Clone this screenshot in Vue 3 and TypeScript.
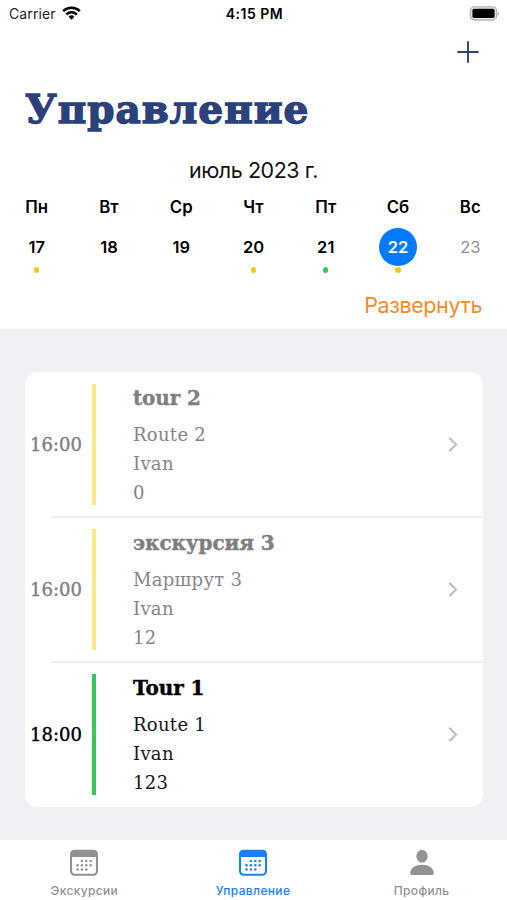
<script setup lang="ts">
interface Day { name: string; num: number; dot?: 'yellow' | 'green'; selected?: boolean; muted?: boolean }
interface Tour { time: string; title: string; route: string; guide: string; count: string; past: boolean }

const days: Day[] = [
  { name: 'Пн', num: 17, dot: 'yellow' },
  { name: 'Вт', num: 18 },
  { name: 'Ср', num: 19 },
  { name: 'Чт', num: 20, dot: 'yellow' },
  { name: 'Пт', num: 21, dot: 'green' },
  { name: 'Сб', num: 22, dot: 'yellow', selected: true },
  { name: 'Вс', num: 23, muted: true },
]

const tours: Tour[] = [
  { time: '16:00', title: 'tour 2', route: 'Route 2', guide: 'Ivan', count: '0', past: true },
  { time: '16:00', title: 'экскурсия 3', route: 'Маршрут 3', guide: 'Ivan', count: '12', past: true },
  { time: '18:00', title: 'Tour 1', route: 'Route 1', guide: 'Ivan', count: '123', past: false },
]

const tabs = [
  { label: 'Экскурсии', icon: 'calendar', active: false },
  { label: 'Управление', icon: 'calendar', active: true },
  { label: 'Профиль', icon: 'person', active: false },
]

const dots: [number, number][] = [
  [12.9, 12], [17.3, 12], [21.7, 12],
  [8.5, 16.2], [12.9, 16.2], [17.3, 16.2], [21.7, 16.2],
  [8.5, 20.4], [12.9, 20.4], [17.3, 20.4],
]
</script>

<template>
  <div class="screen">
    <header class="top">
      <div class="status">
        <div class="carrier">
          <span>Carrier</span>
          <svg width="19" height="14" viewBox="0 0 19 14" fill="none" stroke="#000" stroke-width="2.5">
            <path d="M1.2 5.1a11.8 11.8 0 0 1 16.6 0" />
            <path d="M4.3 8.5a7.4 7.4 0 0 1 10.4 0" />
            <path d="M9.5 13.7 6.6 10.8a4.1 4.1 0 0 1 5.8 0z" fill="#000" stroke="none" />
          </svg>
        </div>
        <div class="clock">4:15 PM</div>
        <div class="battery">
          <svg width="31" height="15" viewBox="0 0 31 15">
            <rect x="1.4" y="0.8" width="26.2" height="13.2" rx="4" fill="#e6e6e6" stroke="#b5b5b5" stroke-width="1.3" />
            <rect x="3.4" y="2.8" width="22.2" height="9.2" rx="1.8" fill="#000" />
            <path d="M29 5.2a2.6 2.6 0 0 1 0 4.4z" fill="#b0b0b0" />
          </svg>
        </div>
      </div>
      <div class="nav">
        <svg width="22" height="22" viewBox="0 0 22 22" stroke="#2b417c" stroke-width="1.9" stroke-linecap="round">
          <path d="M11 1v20M1 11h20" />
        </svg>
      </div>
      <h1 class="heading">Управление</h1>
      <div class="month">июль 2023 г.</div>
      <div class="week">
        <div v-for="d in days" :key="d.num" class="day">
          <span class="dname">{{ d.name }}</span>
          <span class="num" :class="{ selected: d.selected, muted: d.muted }">{{ d.num }}</span>
          <i class="dot" :class="d.dot"></i>
        </div>
      </div>
      <div class="expand"><span>Развернуть</span></div>
    </header>

    <main class="content">
      <div class="card">
        <div v-for="(t, i) in tours" :key="i" class="row" :class="{ past: t.past }">
          <div class="time">{{ t.time }}</div>
          <div class="bar"></div>
          <div class="info">
            <div class="title">{{ t.title }}</div>
            <div class="line">{{ t.route }}</div>
            <div class="line">{{ t.guide }}</div>
            <div class="line">{{ t.count }}</div>
          </div>
          <svg class="chev" width="10" height="16" viewBox="0 0 10 16" fill="none" stroke="#c1c1c3" stroke-width="2.2">
            <path d="M1.3 1.9 8 8.500l-6.700 6.600" />
          </svg>
        </div>
      </div>
    </main>

    <footer class="tabs">
      <div v-for="t in tabs" :key="t.label" class="tab" :class="{ active: t.active }">
        <svg v-if="t.icon === 'calendar'" width="30" height="28" viewBox="0 0 30 28">
          <rect x="2" y="1.9" width="26" height="23.8" rx="3.6" fill="none" stroke="currentColor" stroke-width="2.1" />
          <path d="M1.5 8V4.5a3.3 3.3 0 0 1 3.3-3.3h20.4a3.3 3.3 0 0 1 3.3 3.3V8z" fill="currentColor" />
          <circle v-for="(p, k) in dots" :key="k" :cx="p[0]" :cy="p[1]" r="1.25" fill="currentColor" />
        </svg>
        <svg v-else width="30" height="28" viewBox="0 0 30 28">
          <ellipse cx="15" cy="7.2" rx="5.6" ry="6.4" fill="currentColor" />
          <path d="M3.2 24c0-4.800 5.200-8.200 11.800-8.200S26.800 19.200 26.800 24c0 1.500-.8 2-2.400 2H5.600c-1.600 0-2.400-.5-2.400-2z" fill="currentColor" />
        </svg>
        <span>{{ t.label }}</span>
      </div>
    </footer>
  </div>
</template>

<style>
body { background: #f0f0f5; }
</style>

<style scoped>
.screen {
  width: 507px;
  height: 900px;
  display: flex;
  flex-direction: column;
  background: #f0f0f5;
  font-family: Inter, "Liberation Sans", sans-serif;
  color: #000;
  overflow: hidden;
}
.top { height: 329px; flex: none; background: #fff; display: flex; flex-direction: column; }
.status {
  height: 28px;
  padding: 0 7px 0 9px;
  display: grid;
  grid-template-columns: 1fr auto 1fr;
  align-items: center;
  font-size: 14px;
  line-height: 28px;
}
.carrier { display: flex; align-items: center; gap: 6px; letter-spacing: 0.1px; color: #222; }
.carrier svg { margin-top: -2px; }
.clock { font-weight: 600; letter-spacing: 0.5px; }
.battery { display: flex; justify-content: flex-end; }
.battery svg { margin-top: -2px; }
.nav { height: 48px; padding: 0 28px 0 0; display: flex; justify-content: flex-end; align-items: center; }
.heading {
  margin: 5px 0 0 25px;
  height: 56px;
  line-height: 56px;
  font-family: "DejaVu Serif", serif;
  font-weight: 700;
  font-size: 39px;
  letter-spacing: 1px;
  color: #2b417c;
  white-space: nowrap;
  -webkit-text-stroke: 1.4px #2b417c;
}
.month { margin-top: 19px; height: 28px; line-height: 28px; text-align: center; font-size: 21.5px; letter-spacing: -0.45px; color: #111; }
.week { margin-top: 11px; padding: 0 0.6px; display: grid; grid-template-columns: repeat(7, 1fr); }
.day { display: flex; flex-direction: column; align-items: center; }
.dname { height: 24px; line-height: 24px; font-size: 16.8px; font-weight: 600; }
.num {
  width: 38px;
  height: 38px;
  margin-top: 9px;
  border-radius: 50%;
  line-height: 38px;
  text-align: center;
  font-size: 16.5px;
  font-weight: 600;
}
.selected { background: #007aff; color: #fff; }
.muted { color: #8f8f92; font-weight: 400; }
.dot { width: 5.4px; height: 5.4px; margin-top: 1.2px; border-radius: 50%; }
.dot.yellow { background: #fdc80c; }
.dot.green { background: #34c759; }
.expand { margin-top: 16px; padding-right: 25px; text-align: right; font-size: 21.5px; letter-spacing: -0.4px; line-height: 32px; color: #f98a26; }

.content { flex: 1; padding: 43px 24px 0 25px; }
.card { background: #fff; border-radius: 13px; font-family: "DejaVu Serif", serif; }
.row { height: 145px; display: flex; position: relative; }
.row + .row::before {
  content: "";
  position: absolute;
  top: -1px;
  left: 25px;
  right: 0;
  height: 2px;
  background: #f0f0f2;
}
.time {
  width: 67.4px;
  padding-left: 5px;
  box-sizing: border-box;
  line-height: 145px;
  font-size: 18px;
  -webkit-text-stroke: 0.4px currentColor;
}
.bar { width: 4px; height: 121px; margin-top: 12px; background: #34c759; }
.info { margin: 12px 0 0 36.6px; flex: 1; white-space: nowrap; }
.title { font-weight: 700; font-size: 20px; line-height: 28px; margin-bottom: 8px; letter-spacing: -0.1px; -webkit-text-stroke: 0.4px currentColor; }
.line { font-size: 18px; line-height: 29px; letter-spacing: 0.3px; color: #161616; }
.past .time, .past .title { color: #7f7f7f; }
.past .line { color: #858585; }
.past .bar { background: #ffe680; }
.chev { margin: 64px 25px 0 0; }

.tabs { height: 60px; flex: none; background: #fff; display: grid; grid-template-columns: repeat(3, 1fr); padding-right: 1px; }
.tab { display: flex; flex-direction: column; align-items: center; padding-top: 9px; color: #929292; }
.tab span { margin-top: 6px; font-size: 12px; line-height: 16px; font-weight: 500; letter-spacing: 0.35px; }
.tab.active { color: #1a80f8; }
</style>
